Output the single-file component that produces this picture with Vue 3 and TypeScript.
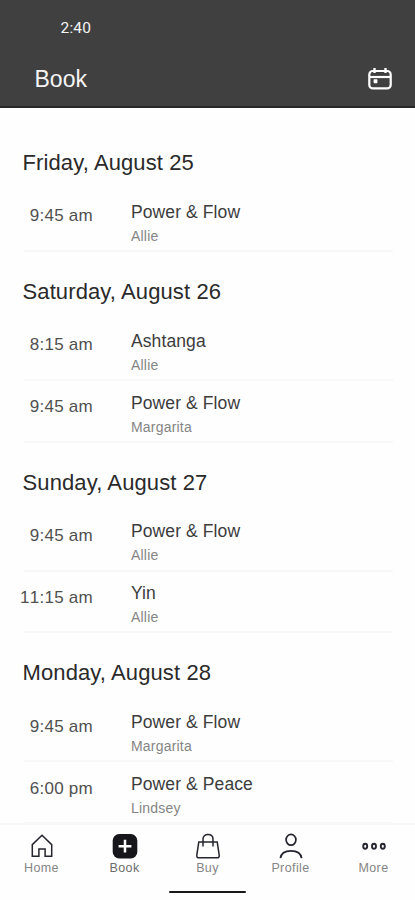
<script setup lang="ts">
interface ClassSlot {
  time: string
  name: string
  teacher: string
}

interface Day {
  label: string
  slots: ClassSlot[]
}

const days: Day[] = [
  {
    label: 'Friday, August 25',
    slots: [{ time: '9:45 am', name: 'Power & Flow', teacher: 'Allie' }],
  },
  {
    label: 'Saturday, August 26',
    slots: [
      { time: '8:15 am', name: 'Ashtanga', teacher: 'Allie' },
      { time: '9:45 am', name: 'Power & Flow', teacher: 'Margarita' },
    ],
  },
  {
    label: 'Sunday, August 27',
    slots: [
      { time: '9:45 am', name: 'Power & Flow', teacher: 'Allie' },
      { time: '11:15 am', name: 'Yin', teacher: 'Allie' },
    ],
  },
  {
    label: 'Monday, August 28',
    slots: [
      { time: '9:45 am', name: 'Power & Flow', teacher: 'Margarita' },
      { time: '6:00 pm', name: 'Power & Peace', teacher: 'Lindsey' },
    ],
  },
]

const tabs: string[] = ['Home', 'Book', 'Buy', 'Profile', 'More']
</script>

<template>
  <div class="screen">
    <header class="top">
      <div class="status">2:40</div>
      <div class="bar">
        <h1 class="title">Book</h1>
        <svg class="calendar" viewBox="0 0 26 24" fill="none" stroke="#fff" stroke-width="2.2">
          <rect x="2.3" y="4" width="21.4" height="17.4" rx="3.5" />
          <path d="M2 10H24" />
          <path d="M7.5 1V6M18.5 1V6" stroke-width="2.4" />
          <rect x="6.6" y="12.2" width="3.8" height="4" rx=".6" fill="#fff" stroke="none" />
        </svg>
      </div>
    </header>

    <main class="schedule">
      <section v-for="day in days" :key="day.label">
        <h2 class="day">{{ day.label }}</h2>
        <div v-for="slot in day.slots" :key="slot.time" class="row">
          <div class="time">{{ slot.time }}</div>
          <div class="info">
            <div class="name">{{ slot.name }}</div>
            <div class="teacher">{{ slot.teacher }}</div>
          </div>
        </div>
      </section>
    </main>

    <footer class="bottom">
      <nav class="tabs">
        <div v-for="tab in tabs" :key="tab" class="tab" :class="{ active: tab === 'Book' }">
          <svg class="icon" viewBox="0 0 26 26" fill="none" stroke="#25252f" stroke-width="1.5">
            <path v-if="tab === 'Home'" d="M3.3 23.2V11.6L13 2.2l9.7 9.4v11.6h-6.6v-7.3H9.9v7.3Z" />
            <template v-else-if="tab === 'Book'">
              <rect x=".7" y="1" width="24.6" height="24.4" rx="6.5" fill="#17171b" stroke="none" />
              <path d="M13 6.8v12.8M6.6 13.2h12.8" stroke="#fff" stroke-width="2.5" />
            </template>
            <template v-else-if="tab === 'Buy'">
              <path d="M3.8 9h18.4l2 13.2q.2 2.600-2.200 2.600H4q-2.400 0-2.200-2.600Z" />
              <path d="M8 13.500V6.200C8 3.200 10 1.400 13 1.400s5 1.800 5 4.800v7.300" />
            </template>
            <template v-else-if="tab === 'Profile'">
              <ellipse cx="13" cy="6.800" rx="4.900" ry="5.400" stroke-width="1.700" />
              <path d="M2.400 25.200c.6-5 4-7.400 10.600-7.400s10 2.400 10.600 7.400" stroke-width="1.700" />
            </template>
            <template v-else>
              <g stroke-width="1.900">
                <ellipse cx="4.200" cy="13.200" rx="2" ry="2.500" />
                <ellipse cx="13" cy="13.200" rx="2" ry="2.500" />
                <ellipse cx="21.800" cy="13.200" rx="2" ry="2.500" />
              </g>
            </template>
          </svg>
          <span class="label">{{ tab }}</span>
        </div>
      </nav>
      <div class="handle"></div>
    </footer>
  </div>
</template>

<style>
body {
  margin: 0;
}
</style>

<style scoped>
.screen {
  display: flex;
  flex-direction: column;
  width: 100%;
  height: 900px;
  overflow: hidden;
  background: #fefefe;
  font-family: "Liberation Sans", Arial, sans-serif;
}

.top {
  box-sizing: border-box;
  flex: none;
  height: 108px;
  background: #404040;
  border-bottom: 2px solid #272727;
  color: #f4f4f4;
}

.status {
  height: 18px;
  padding: 19px 0 0 60.5px;
  font-family: Roboto, sans-serif;
  font-size: 15.5px;
  line-height: 18px;
  letter-spacing: 0.2px;
}

.bar {
  display: flex;
  align-items: center;
  justify-content: space-between;
  height: 30px;
  padding: 27px 22px 0 34.5px;
}

.title {
  margin: 0;
  font-size: 23px;
  font-weight: 400;
  line-height: 30px;
}

.calendar {
  width: 26px;
  height: 24px;
}

.schedule {
  flex: 1;
  min-height: 0;
  padding: 15px 22px 0;
  overflow: hidden;
}

.day {
  box-sizing: border-box;
  height: 67px;
  margin: 0;
  padding: 27px 0 0 0.5px;
  color: #2a2a2a;
  font-size: 22px;
  font-weight: 400;
  line-height: 26px;
  letter-spacing: 0.11px;
}

.row {
  box-sizing: border-box;
  display: flex;
  height: 61.9px;
  margin-left: 2px;
  border-bottom: 2px solid #f8f8f8;
}

.time {
  flex: none;
  width: 78px;
  margin: 16.3px 0 0 -9px;
  color: #505050;
  font-size: 17px;
  font-kerning: none;
  line-height: 20px;
  letter-spacing: 0.25px;
  text-align: right;
  white-space: nowrap;
}

.info {
  padding: 10.8px 0 0 38px;
}

.name {
  color: #3c3c3c;
  font-size: 17.5px;
  line-height: 22px;
  letter-spacing: 0.1px;
}

.teacher {
  margin-top: 4px;
  color: #858585;
  font-size: 14px;
  line-height: 18px;
  letter-spacing: 0.2px;
}

.bottom {
  box-sizing: border-box;
  display: flex;
  flex: none;
  flex-direction: column;
  align-items: center;
  height: 77px;
  border-top: 2px solid #f8f8f8;
}

.tabs {
  display: grid;
  grid-template-columns: repeat(5, 1fr);
  width: 100%;
  height: 64px;
}

.tab {
  display: flex;
  flex-direction: column;
  align-items: center;
  padding-top: 8px;
  color: #858585;
}

.active {
  color: #6c6c6c;
}

.icon {
  width: 26px;
  height: 26px;
}

.label {
  margin-top: 1px;
  font-size: 12.5px;
  line-height: 16px;
  letter-spacing: 0.4px;
}

.handle {
  width: 77px;
  height: 2px;
  margin-top: 2px;
  border-radius: 1px;
  background: #171717;
}
</style>
